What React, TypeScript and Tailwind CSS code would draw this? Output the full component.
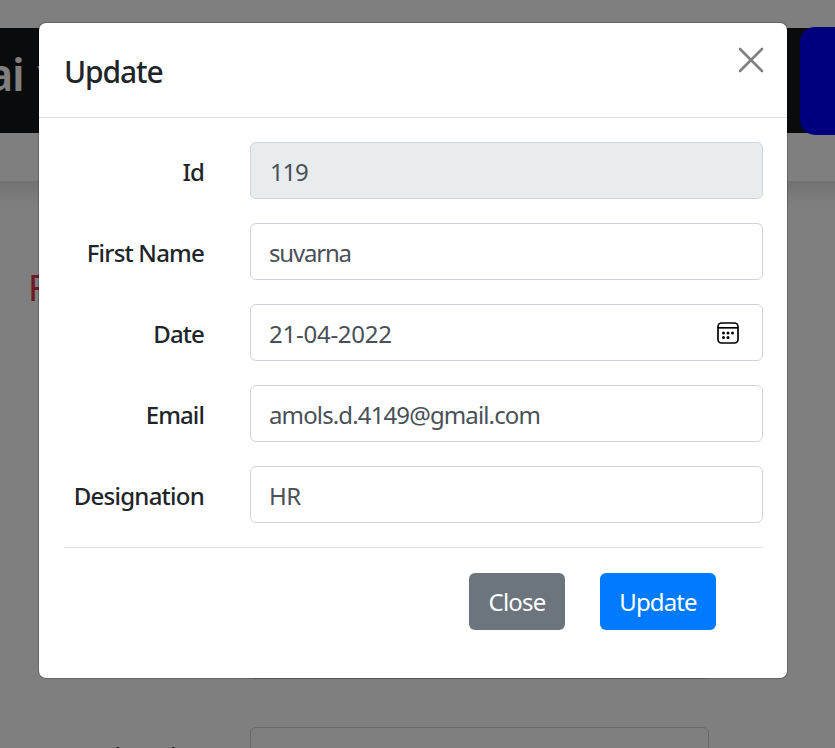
import React from "react";

type Field = {
  label: string;
  value: string;
  disabled?: boolean;
  calendar?: boolean;
  labelClass: string;
  valueClass: string;
};

const fields: Field[] = [
  { label: "Id", value: "119", disabled: true, labelClass: "tracking-[-1px]", valueClass: "pl-px tracking-[-1.2px]" },
  { label: "First Name", value: "suvarna", labelClass: "tracking-[-0.8px]", valueClass: "tracking-[-1.2px]" },
  { label: "Date", value: "21-04-2022", calendar: true, labelClass: "tracking-[-0.9px]", valueClass: "tracking-[-0.25px]" },
  { label: "Email", value: "amols.d.4149@gmail.com", labelClass: "tracking-[-0.9px]", valueClass: "tracking-[-0.87px]" },
  { label: "Designation", value: "HR", labelClass: "tracking-[-0.75px]", valueClass: "tracking-[-0.6px]" },
];

function CalendarIcon() {
  return (
    <svg width="24" height="24" viewBox="0 0 24 24" className="shrink-0" fill="none" stroke="#000" strokeWidth="1.7">
      <rect x="2" y="2" width="20" height="20" rx="3.5" />
      <path d="M2 6.8h20" />
      <g fill="#000" stroke="none">
        <circle cx="7.5" cy="12" r="1.5" />
        <circle cx="12" cy="12" r="1.5" />
        <circle cx="16.5" cy="12" r="1.5" />
        <circle cx="7.5" cy="16.5" r="1.5" />
        <circle cx="12" cy="16.5" r="1.5" />
      </g>
    </svg>
  );
}

function PageBehind() {
  return (
    <div className="flex h-full flex-col bg-white">
      <header className="-mx-[40px] h-[181px] shrink-0 bg-white px-[40px] pt-[28px] shadow-[0_8px_24px_rgba(0,0,0,0.15)]">
        <div className="flex h-[105px] justify-between bg-[#12161a]">
          <div className="-ml-[13px] whitespace-nowrap pt-[13px] text-[45px] font-semibold leading-[66px] tracking-[-1.4px] text-white [word-spacing:4px]">
            ai v
          </div>
          <div className="-mr-[60px] -mt-px h-[108px] w-[95px] rounded-[15px] bg-[#0000ff]" />
        </div>
      </header>
      <div className="pl-[28px] pt-[83px] text-[36px] leading-[48px] text-[#dc3545]">F</div>
      <div className="ml-[250px] mt-[310px] h-[57px] w-[459px] shrink-0 rounded-[6px] border border-[#ced4da]" />
      <div className="mt-[48px] flex shrink-0">
        <div className="w-[204px] pt-[11px] text-right text-[24px] font-medium leading-[36px] tracking-[-0.75px] text-[#212529]">
          Designation
        </div>
        <div className="ml-[46px] h-[57px] w-[459px] rounded-[6px] border border-[#ced4da]" />
      </div>
    </div>
  );
}

function UpdateDialog() {
  return (
    <div className="h-[657px] w-[750px] rounded-[8px] border border-black/20 bg-white bg-clip-padding text-[#212529]">
      <div className="flex h-[95px] justify-between border-b border-[#dee2e6] pl-[25px] pr-[23px]">
        <h4 className="pt-[26px] text-[30px] font-medium leading-[45px] tracking-[-1.1px]">Update</h4>
        <button aria-label="Close dialog" className="flex h-[26px] w-[26px] pt-[24px]">
          <svg width="26" height="26" viewBox="0 0 26 26" className="shrink-0" stroke="#808080" strokeWidth="2.6" strokeLinecap="round">
            <path d="M2 2l22 22M24 2L2 24" />
          </svg>
        </button>
      </div>
      <div className="mx-[25px] w-[699px] pt-[24px]">
        <div className="flex flex-col gap-[24px] border-b border-[#dee2e6] pb-[24px]">
          {fields.map((f) => (
            <div key={f.label} className="flex h-[57px]">
              <div className="flex w-[140px] shrink-0 justify-end pt-[12px] text-[24px] font-medium leading-[36px]">
                <span className={"whitespace-nowrap " + f.labelClass}>{f.label}</span>
              </div>
              <div
                className={
                  "ml-[46px] flex w-[513px] items-center justify-between rounded-[6px] border border-[#ced4da] pl-[18px] pr-[22px] text-[24px] leading-[36px] text-[#495057] " +
                  (f.disabled ? "bg-[#e9ecef]" : "bg-white")
                }
              >
                <span className={"pt-[2px] " + f.valueClass}>{f.value}</span>
                {f.calendar && <CalendarIcon />}
              </div>
            </div>
          ))}
        </div>
        <div className="flex justify-end gap-[35px] pr-[47px] pt-[25px] text-[24px] leading-[36px] text-white">
          <button className="h-[57px] w-[96px] rounded-[6px] bg-[#6c757d] pt-[1px] tracking-[-0.8px]">Close</button>
          <button className="h-[57px] w-[116px] rounded-[6px] bg-[#007bff] pt-[1px] tracking-[-0.9px]">Update</button>
        </div>
      </div>
    </div>
  );
}

export default function App() {
  return (
    <div className="relative h-[748px] w-[835px] overflow-hidden font-['Noto_Sans',sans-serif]">
      <PageBehind />
      <div className="absolute inset-0 bg-black/50 pl-[38px] pt-[22px]">
        <UpdateDialog />
      </div>
    </div>
  );
}
